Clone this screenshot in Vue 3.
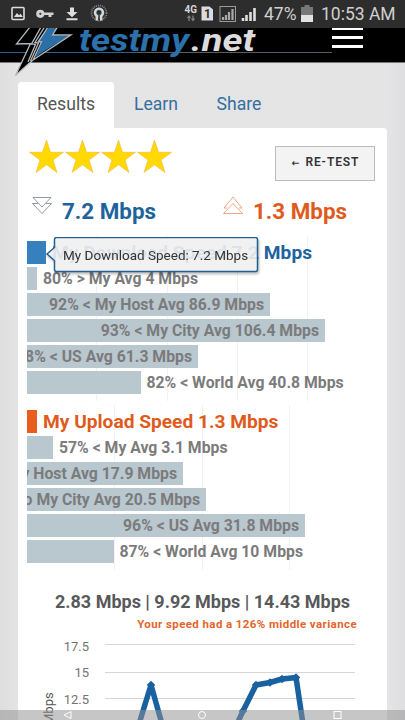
<script setup>
const down = [
  { w: 19, label: 'My Download Speed 7.2 Mbps', kind: 'blue' },
  { w: 10, label: '80% > My Avg 4 Mbps' },
  { w: 243, label: '92% < My Host Avg 86.9 Mbps', inside: true },
  { w: 298, label: '93% < My City Avg 106.4 Mbps', inside: true },
  { w: 171, label: '98% < US Avg 61.3 Mbps', inside: true },
  { w: 113.5, label: '82% < World Avg 40.8 Mbps' },
]
const up = [
  { w: 10, label: 'My Upload Speed 1.3 Mbps', kind: 'orange' },
  { w: 26, label: '57% < My Avg 3.1 Mbps' },
  { w: 156, label: 'My Host Avg 17.9 Mbps', inside: true },
  { w: 179, label: 'to My City Avg 20.5 Mbps', inside: true },
  { w: 278, label: '96% < US Avg 31.8 Mbps', inside: true },
  { w: 86.5, label: '87% < World Avg 10 Mbps' },
]
const charts = [
  { name: 'down', rows: down, grid: [69, 140, 210, 280] },
  { name: 'up', rows: up, grid: [87, 175, 262] },
]
const line = [[139, 724], [151, 685], [162, 724], [237, 724], [243, 711], [256, 685], [270, 682.5], [282, 679], [296, 677.5], [303, 724]]
const points = line.map(([x, y]) => `${x - 18},${y - 634}`).join(' ')
const marks = line.filter(p => p[1] < 720).map(([x, y]) => [x - 18, y - 634])
</script>

<template>
  <div class="screen">
    <div class="status">
      <svg class="left-icons" width="120" height="28" viewBox="0 0 120 28">
        <rect x="12" y="7.500" width="12" height="12" rx="1" fill="none" stroke="#dedede" stroke-width="1.600" />
        <path d="M14 17l3-4 2 2.300 1.500-1.500 2.500 3.200z" fill="#dedede" />
        <circle cx="40.300" cy="13.800" r="2.600" fill="none" stroke="#d2d2d2" stroke-width="3" />
        <path d="M44 12.500h9.500v2.600h-2v2h-3v-2H44z" fill="#d2d2d2" />
        <path d="M70 7.500h4v4.500h3.500l-5.500 5.200-5.500-5.200H70zM66.500 18.300h11v2h-11z" fill="#dedede" />
        <circle cx="99" cy="13" r="7.500" fill="none" stroke="#858585" stroke-width="1.800" stroke-dasharray="1 1" />
        <circle cx="99" cy="13" r="5.500" fill="#555" />
        <path d="M96.800 20.500v-4.500a4 4 0 1 1 4.400 0v4.500" fill="none" stroke="#d8d8d8" stroke-width="2.400" />
        <circle cx="99" cy="12.500" r="2" fill="#17353a" />
      </svg>
      <svg class="right-icons" width="82" height="28" viewBox="0 0 82 28">
        <text x="0.500" y="13.300" class="net4g" textLength="12.500" lengthAdjust="spacingAndGlyphs">4G</text>
        <path d="M5 21v-5m-1.500 2L5 16l1.500 2M9 15.500v5m-1.500-2l1.500 2 1.500-2" fill="none" stroke="#858585" stroke-width="1.200" />
        <path d="M17.500 6.500h8l3.500 3v11H17.500z" fill="#dcdcdc" />
        <text x="20" y="18" class="sim">1</text>
        <rect x="36" y="6.500" width="15.500" height="15" fill="none" stroke="#9b9b9b" />
        <path d="M39 20v-3M42 20v-5M45 20v-8M48.500 20v-11" stroke="#a9a9a9" stroke-width="2.200" />
        <path d="M59 21v-3M62.500 21v-6M66.500 21v-9M70.500 21V8" stroke="#dedede" stroke-width="2.600" />
      </svg>
      <span class="pct">47%</span>
      <svg class="battery" width="12" height="18" viewBox="0 0 12 18">
        <path d="M3.500 0h5v2H12v8H0V2h3.500z" fill="#777" />
        <path d="M0 10h12v7H0z" fill="#e2e2e2" />
      </svg>
      <span class="clock">10:53 AM</span>
    </div>

    <header class="top">
      <svg class="brand" width="405" height="50" viewBox="0 28 405 50">
        <path d="M0 52.500h332" stroke="#565f66" />
        <path d="M0 52.500h135" stroke="#256493" />
        <path d="M30 27L16.500 44l14-.5L15.500 75.500 33 59l37-24-18-.5L57 27z" fill="#000" />
        <path d="M48.500 28H57l-5.500 7.500 17 .5-25 15.500-8.500 6 7-15-5-1z" fill="#2c6fa7" />
        <path d="M30 27L16.500 44l14-.5L15.500 75.500 33 60l38-25.200-18.500.2L57.500 27M41 27l-9.500 17 4 .3L28 62M44.500 27L35 42.500l3.500.5-8 18M48 27l-9.500 14.500 3 .5L33 60" fill="none" stroke="#b4b9bd" stroke-width="1.300" />
        <text x="79" y="51" class="logo blue-text" textLength="110" lengthAdjust="spacingAndGlyphs">testmy</text>
        <text x="191" y="51" class="logo grey-text" textLength="64" lengthAdjust="spacingAndGlyphs">.net</text>
        <path d="M332 28.500h31M332 37.500h31M332 46.500h31" stroke="#fff" stroke-width="3" />
      </svg>
    </header>

    <nav class="tabs">
      <span class="tab active">Results</span>
      <span class="tab">Learn</span>
      <span class="tab">Share</span>
    </nav>

    <main class="card">
      <div class="rating">
        <svg width="146" height="36" viewBox="0 0 146 36">
          <path
            v-for="i in 4" :key="i" :transform="`translate(${(i - 1) * 36} 0)`"
            d="M17.500 1l4 12.300H34.500L24 21l4 12.500-10.500-7.700L7 33.500 11 21 .5 13.300h13z"
            fill="#ffd900" stroke="#f3b63f" stroke-width=".6"
          />
        </svg>
        <button class="retest"><span class="arrow">←</span> RE-TEST</button>
      </div>

      <div class="speeds">
        <svg width="20" height="18" viewBox="0 0 20 18">
          <path d="M1 .5h18L10 10zM.5 6.500H6M14 6.500h5.500L10 16.500.5 6.500" fill="none" stroke="#71808d" stroke-width=".8" />
        </svg>
        <strong class="down-value">7.2 Mbps</strong>
        <svg width="20" height="19" viewBox="0 0 20 19">
          <path d="M1 12L10 1l9 11h-3M4 12H1M.5 17.500L10 7.500l9.500 10z" fill="none" stroke="#e49369" stroke-width=".8" />
        </svg>
        <strong class="up-value">1.3 Mbps</strong>
      </div>

      <section v-for="c in charts" :key="c.name" class="chart" :class="c.name">
        <svg class="grid" width="350" height="165">
          <path v-for="x in c.grid" :key="x" :d="`M${x}.5 0v165`" stroke="#f2f2f2" />
        </svg>
        <div v-for="r in c.rows" :key="r.label" class="row" :class="r.kind">
          <div class="bar" :style="{ width: r.w + 'px' }">
            <span v-if="r.inside" class="label">{{ r.label }}</span>
          </div>
          <span v-if="!r.inside" class="label">{{ r.label }}</span>
        </div>
        <div v-if="c.name === 'down'" class="tooltip">
          <svg width="216" height="42" viewBox="0 0 216 42">
            <path d="M9.500 2.500q0-2 2-2h199q2 0 2 2v30q0 2-2 2h-199q-2 0-2-2v-9L2 17l7.500-6.500z" fill="#f7f7f7" fill-opacity=".88" stroke="#225f93" stroke-width="1.500" />
          </svg>
          <span>My Download Speed: 7.2 Mbps</span>
        </div>
      </section>

      <h3 class="summary">2.83 Mbps | 9.92 Mbps | 14.43 Mbps</h3>
      <p class="variance">Your speed had a 126% middle variance</p>

      <svg class="plot" width="369" height="86" viewBox="0 0 369 86">
        <path d="M87 10.500h250M87 38.500h250M87 64.500h250" stroke="#d6d6d6" />
        <text x="71" y="17" class="tick">17.5</text>
        <text x="71" y="43" class="tick">15</text>
        <text x="71" y="70" class="tick">12.5</text>
        <text class="axis" transform="translate(35 91) rotate(-90)">Mbps</text>
        <polyline :points="points" fill="none" stroke="#19619f" stroke-width="5.500" stroke-linejoin="round" />
        <rect v-for="([x, y], i) in marks" :key="i" :x="x - 3" :y="y - 3" width="6" height="6" :transform="`rotate(45 ${x} ${y})`" fill="#19619f" />
      </svg>
    </main>

    <svg class="softkeys" width="405" height="10" viewBox="0 0 405 10">
      <path d="M71 1.500v7L64 5z" fill="none" stroke="#fff" />
      <circle cx="202" cy="5" r="3.500" fill="none" stroke="#fff" />
      <rect x="334" y="1.500" width="7" height="7" fill="none" stroke="#fff" />
    </svg>
  </div>
</template>

<style>
body { margin: 0; overflow: hidden; }
</style>

<style scoped>
.screen {
  position: relative;
  width: 405px;
  height: 720px;
  overflow: hidden;
  background: linear-gradient(90deg, #dedede, #e5e5e6 20px, #e4e4e5 388px, #dedee0);
  font-family: Roboto, sans-serif;
}
.status {
  display: flex;
  align-items: center;
  height: 28px;
  background: #2d2d2e;
  color: #d0d0d0;
  font-size: 17.5px;
}
.left-icons { margin-right: 64px; }
.right-icons { margin-right: -2px; }
.net4g { font: bold 11px Roboto, sans-serif; fill: #d5d5d5; }
.sim { font: bold 12px Roboto, sans-serif; fill: #2d2d2e; }
.pct { width: 33px; white-space: nowrap; }
.battery { margin: 0 8px 0 4px; }
.clock { font-size: 17.5px; white-space: nowrap; }
.top {
  height: 34px;
  background: #000;
  border-bottom: 1px solid #777;
}
.brand { display: block; position: relative; z-index: 1; }
.logo { font: italic bold 32px Roboto, sans-serif; }
.blue-text { fill: #2b71ac; }
.grey-text { fill: #dcdcdc; }
.tabs {
  display: flex;
  margin: 19px 0 0 18px;
  height: 46px;
}
.tab {
  width: 82px;
  text-align: center;
  font-size: 17.6px;
  line-height: 44px;
  color: #326f9f;
}
.tab.active {
  width: 96px;
  background: #fff;
  border-radius: 4px 4px 0 0;
  color: #555;
}
.tab:nth-child(2) { width: 84px; }
.card {
  width: 369px;
  height: 592px;
  margin-left: 18px;
  background: #fff;
  border-radius: 0 4px 0 0;
}
.rating {
  display: flex;
  justify-content: space-between;
  height: 69px;
  box-sizing: border-box;
  padding: 11px 12px 0 11px;
}
.retest {
  width: 100px;
  height: 35px;
  margin-top: 7px;
  padding: 0 0 3px 1px;
  border: 1px solid #bcbcbe;
  background: #f3f3f3;
  color: #333;
  font: 600 12px Roboto, sans-serif;
  letter-spacing: .9px;
  white-space: nowrap;
}
.arrow { margin-right: 1px; font-family: "DejaVu Sans", sans-serif; font-size: 9.5px; }
.speeds {
  display: flex;
  height: 44px;
  padding-left: 14px;
}
.speeds strong { font-size: 22.4px; font-weight: 700; line-height: 28px; white-space: nowrap; }
.down-value { width: 151px; padding-left: 10px; color: #1f639d; }
.speeds svg:nth-of-type(2) { margin: -1px 0 0 10px; }
.up-value { padding-left: 10px; color: #df5b1d; }
.chart {
  position: relative;
  display: grid;
  grid-auto-rows: 23px;
  gap: 3px;
  margin-left: 9px;
}
.up { margin-top: 16px; }
.grid { position: absolute; left: 0; top: -5px; }
.row { display: flex; position: relative; gap: 6px; }
.bar {
  display: flex;
  justify-content: flex-end;
  flex: none;
  overflow: hidden;
  background: #b9c7cf;
}
.label {
  flex: none;
  font-size: 15.77px;
  font-weight: 700;
  line-height: 24px;
  white-space: nowrap;
  color: #7b7b7c;
}
.bar .label { margin-right: 6px; }
.blue .bar { background: #3580bd; }
.orange .bar { background: #e85d1c; }
.blue .label, .orange .label { font-size: 19.15px; }
.blue .label { color: #1f639d; }
.orange .label { color: #df5b1d; }
.tooltip {
  position: absolute;
  left: 18px;
  top: -4px;
  filter: drop-shadow(1px 2px 1px #0004);
}
.tooltip svg { display: block; }
.tooltip span {
  position: absolute;
  left: 18px;
  top: 10px;
  font-size: 13.5px;
  line-height: 16px;
  white-space: nowrap;
  color: #333;
}
.summary {
  margin: 27px 0 0;
  text-align: center;
  font-size: 18px;
  font-weight: 700;
  line-height: 24px;
  color: #58595b;
}
.variance {
  margin: 3px 30px 0 0;
  text-align: right;
  font-size: 11.5px;
  font-weight: 700;
  line-height: 14px;
  letter-spacing: .4px;
  color: #e3652a;
}
.plot { display: block; margin-top: 3px; }
.tick { font: 13px Roboto, sans-serif; fill: #737373; text-anchor: end; }
.axis { font: 13px Roboto, sans-serif; fill: #555; }
.softkeys {
  position: absolute;
  left: 0;
  bottom: 0;
  background: rgba(145, 145, 145, .52);
}
</style>
